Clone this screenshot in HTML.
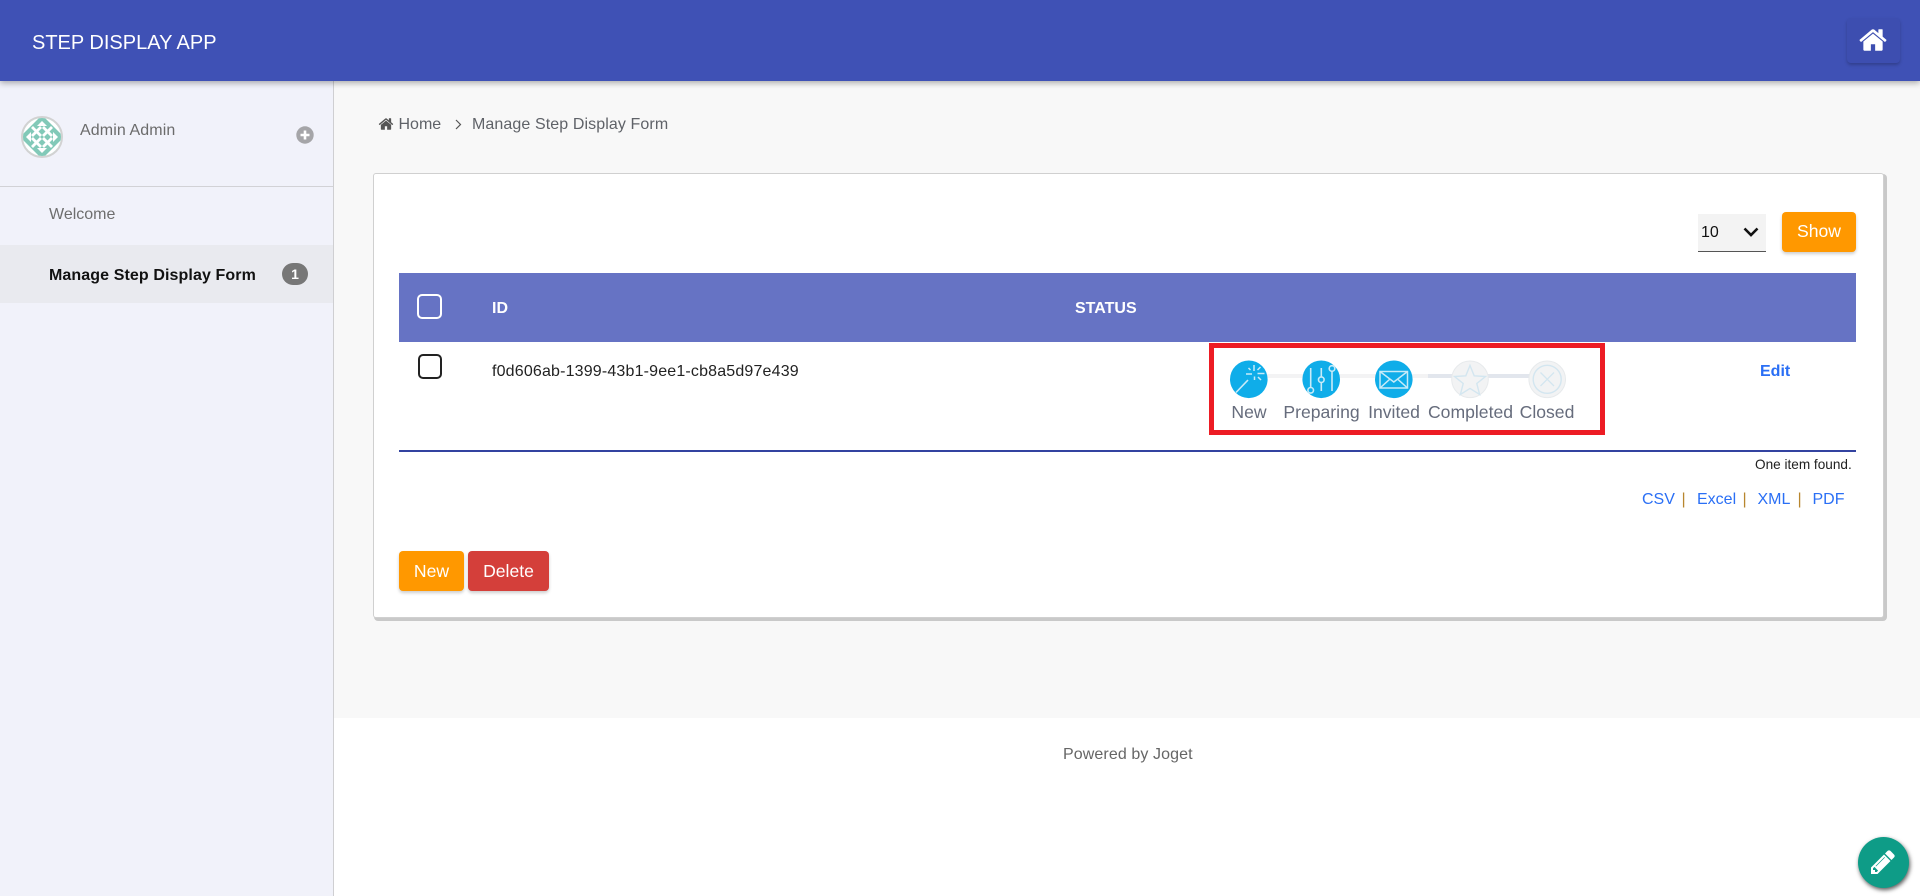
<!DOCTYPE html>
<html lang="en">
<head>
<meta charset="utf-8">
<title>Step Display App</title>
<style>
*{box-sizing:border-box}
html,body{margin:0;padding:0;width:1920px;height:896px;overflow:hidden;background:#fff;font-family:"Liberation Sans",Arial,sans-serif}
a{text-decoration:none}
.t{position:absolute;white-space:nowrap;line-height:20px;margin:0}
.abs{position:absolute}
#main{left:334px;top:81px;width:1586px;height:637px;background:#f8f8f8}
#side{left:0;top:81px;width:334px;height:815px;background:#f1f2fa;border-right:1px solid #cfcfd2}
#head{left:0;top:0;width:1920px;height:81px;background:#3f51b5;box-shadow:0 2px 6px rgba(0,0,0,.32)}
#homebtn{left:1847px;top:18px;width:53px;height:45px;background:#3d4eb0;border-radius:4px;box-shadow:0 2px 3px rgba(0,0,0,.22)}
#card{left:373px;top:173px;width:1511px;height:445px;background:#fff;border:1px solid #d0d0d0;border-radius:3px;box-shadow:2px 2px 0 1px #c9c9c9}
.btn{position:absolute;border:0;color:#fff;font:17.6px/20px "Liberation Sans",Arial,sans-serif;height:40px;border-radius:4px;padding:0;box-shadow:0 2px 3px rgba(0,0,0,.2);text-align:center}
input.cb{appearance:none;-webkit-appearance:none;position:absolute;margin:0;background:transparent;border-radius:5px}
.lbl{position:absolute;top:402px;line-height:20px;font-size:17.6px;color:#666c7c;white-space:nowrap;transform:translateX(-50%)}
.lnk{color:#2a6ff5}
.sep{color:#b8862e}
</style>
</head>
<body>
<div id="main" class="abs"></div>
<div id="side" class="abs"></div>
<div class="abs" style="left:0;top:186px;width:333px;height:1px;background:#d2d2d6"></div>
<div class="abs" style="left:0;top:245px;width:333px;height:58px;background:#e9eaef"></div>

<header id="head" class="abs"></header>
<div class="t" style="left:32px;top:33px;font-size:20px;color:#fff">STEP DISPLAY APP</div>
<div id="homebtn" class="abs"></div>
<svg class="abs" style="left:1858px;top:25px" width="30" height="30" viewBox="0 0 1792 1792"><path fill="#fff" d="M1472 992v480q0 26-19 45t-45 19h-384v-384h-256v384h-384q-26 0-45-19t-19-45v-480q0-1 .5-3t.5-3l575-474 575 474q1 2 1 6zm223-69l-62 74q-8 9-21 11h-3q-13 0-21-7l-692-577-692 577q-12 8-24 7-13-2-21-11l-62-74q-8-10-7-23.500t11-21.500l719-599q32-26 76-26t76 26l244 204v-195q0-14 9-23t23-9h192q14 0 23 9t9 23v408l219 182q10 8 11 21.500t-7 23.500z"/></svg>

<!-- sidebar -->
<svg class="abs" style="left:21px;top:116px" width="42" height="42" viewBox="0 0 42 42">
<defs><clipPath id="av"><circle cx="21" cy="21" r="19"/></clipPath></defs>
<circle cx="21" cy="21" r="20" fill="#fff" stroke="#d2d2d2" stroke-width="2"/>
<g clip-path="url(#av)">
<rect width="42" height="42" fill="#82c9b8"/>
<g fill="#fff">
<polygon points="21,5 26,10 16,10"/><polygon points="21,37 26,32 16,32"/><polygon points="5,21 10,16 10,26"/><polygon points="37,21 32,16 32,26"/>
<polygon points="2,2 18,2 2,18"/><polygon points="40,2 24,2 40,18"/><polygon points="2,40 18,40 2,24"/><polygon points="40,40 24,40 40,24"/>
<path d="M11 11l9 9m0-9l-9 9M22 11l9 9m0-9l-9 9M11 22l9 9m0-9l-9 9M22 22l9 9m0-9l-9 9" stroke="#fff" stroke-width="2.800" fill="none"/>
</g>
</g>
</svg>
<div class="t" style="left:80px;top:121px;font-size:16px;color:#6b6b6b;letter-spacing:.1px">Admin Admin</div>
<svg class="abs" style="left:296px;top:126px" width="18" height="18" viewBox="0 0 18 18"><circle cx="9" cy="9" r="8.700" fill="#a5a5a8"/><path d="M9 4.500v9M4.500 9h9" stroke="#fff" stroke-width="2.600"/></svg>
<a class="t" style="left:49px;top:205px;font-size:16px;color:#6e6e6e">Welcome</a>
<a class="t" style="left:49px;top:266px;font-size:16px;font-weight:bold;color:#111;letter-spacing:.1px">Manage Step Display Form</a>
<div class="abs" style="left:282px;top:263px;width:26px;height:22px;border-radius:11px;background:#777;color:#fff;font-size:14px;font-weight:bold;line-height:22px;text-align:center">1</div>

<!-- breadcrumb -->
<svg class="abs" style="left:378px;top:116px" width="16" height="16" viewBox="0 0 1792 1792"><path fill="#555" d="M1472 992v480q0 26-19 45t-45 19h-384v-384h-256v384h-384q-26 0-45-19t-19-45v-480q0-1 .5-3t.5-3l575-474 575 474q1 2 1 6zm223-69l-62 74q-8 9-21 11h-3q-13 0-21-7l-692-577-692 577q-12 8-24 7-13-2-21-11l-62-74q-8-10-7-23.500t11-21.500l719-599q32-26 76-26t76 26l244 204v-195q0-14 9-23t23-9h192q14 0 23 9t9 23v408l219 182q10 8 11 21.500t-7 23.500z"/></svg>
<a class="t" style="left:398.500px;top:115px;font-size:16px;color:#5f6268">Home</a>
<svg class="abs" style="left:454px;top:119px" width="9" height="11" viewBox="0 0 9 11"><path d="M2 1l4.500 4.500L2 10" fill="none" stroke="#555" stroke-width="1.200"/></svg>
<div class="t" style="left:472px;top:115px;font-size:16px;color:#5f6268;letter-spacing:.1px">Manage Step Display Form</div>

<!-- card -->
<div id="card" class="abs"></div>
<select class="abs" style="left:1698px;top:214px;width:68px;height:38px;border:0;border-bottom:1px solid #555;background:#f3f3f3;font:16px 'Liberation Sans',Arial,sans-serif;color:#111;appearance:none;-webkit-appearance:none;padding:0 0 0 3px;border-radius:0"><option>10</option></select>
<svg class="abs" style="left:1743px;top:226px" width="16" height="12" viewBox="0 0 16 12"><path d="M1.500 2.500L8 9l6.500-6.500" fill="none" stroke="#111" stroke-width="2.600"/></svg>
<button class="btn" style="left:1782px;top:212px;width:74px;padding-bottom:2px;background:#ff9800">Show</button>

<!-- table -->
<div class="abs" style="left:399px;top:273px;width:1457px;height:69px;background:#6673c4"></div>
<input type="checkbox" class="cb" style="left:417px;top:294px;width:25px;height:25px;border:2px solid #fff">
<div class="t" style="left:492px;top:299px;font-size:16px;font-weight:bold;color:#fff">ID</div>
<div class="t" style="left:1075px;top:299px;font-size:16px;font-weight:bold;color:#fff">STATUS</div>
<input type="checkbox" class="cb" style="left:418px;top:354px;width:24px;height:25px;border:2px solid #222">
<div class="t" style="left:492px;top:362px;font-size:16px;color:#222;letter-spacing:.17px">f0d606ab-1399-43b1-9ee1-cb8a5d97e439</div>

<!-- stepper -->
<div class="abs" style="left:1209px;top:343px;width:396px;height:92px;border:5px solid #ed1c24"></div>
<svg class="abs" style="left:1220px;top:355px" width="360" height="50" viewBox="1220 355 360 50">
<rect x="1262" y="374" width="166" height="4" fill="#f3f3f4"/>
<rect x="1428" y="374" width="104" height="4" fill="#e2e6ed"/>
<!-- New -->
<circle cx="1248.800" cy="379.300" r="18.800" fill="#0fade9"/>
<g stroke="#c8ebf8" fill="none" stroke-width="1.500">
<path d="M1236 392.500L1248 380" stroke-width="1.600"/>
<path d="M1254 365v6M1254.500 376.500v3.500M1257.500 373.500h7M1246 374h6M1257.500 370l3-3M1258 377l3 3M1250.500 370l-2-2"/>
</g>
<!-- Preparing -->
<circle cx="1321.200" cy="379.300" r="18.800" fill="#0fade9"/>
<g stroke="#c8ebf8" fill="none" stroke-width="1.600">
<path d="M1310.700 368v19.500M1321.300 368v9M1321.300 383v8M1332 371.500v19.500"/>
<g fill="#0fade9"><circle cx="1310.700" cy="390.300" r="2.800"/><circle cx="1321.300" cy="379.700" r="2.800"/><circle cx="1332" cy="368.500" r="2.800"/></g>
</g>
<!-- Invited -->
<circle cx="1393.800" cy="379.300" r="18.800" fill="#0fade9"/>
<g stroke="#c8ebf8" fill="none" stroke-width="1.500">
<rect x="1380" y="371.500" width="27.500" height="16.500"/>
<path d="M1380 371.500l13.800 10.500 13.700-10.500M1380 388l10-9M1407.500 388l-10-9"/>
</g>
<!-- Completed -->
<circle cx="1470" cy="379.300" r="18.300" fill="#f2f3f4" stroke="#e7eaec" stroke-width="1"/>
<path d="M1470 365.500l4.200 10.300 11.300.7-8.700 7 2.800 11-9.600-6.100-9.600 6.100 2.800-11-8.700-7 11.300-.7z" fill="none" stroke="#d3e6f0" stroke-width="1.400"/>
<!-- Closed -->
<circle cx="1547.200" cy="379.300" r="18.300" fill="#f2f3f4" stroke="#e7eaec" stroke-width="1"/>
<circle cx="1547.200" cy="379.300" r="14" fill="none" stroke="#d3e6f0" stroke-width="1.400"/>
<path d="M1540.500 372.500l13.500 13.500M1554 372.500l-13.500 13.500" stroke="#d3e6f0" stroke-width="1.300"/>
</svg>
<div class="lbl" style="left:1249px">New</div>
<div class="lbl" style="left:1321.500px">Preparing</div>
<div class="lbl" style="left:1394px">Invited</div>
<div class="lbl" style="left:1470.500px">Completed</div>
<div class="lbl" style="left:1547px">Closed</div>

<a class="t lnk" style="left:1760px;top:362px;font-size:16px;font-weight:bold">Edit</a>
<div class="abs" style="left:399px;top:450px;width:1457px;height:2px;background:#3343a0"></div>
<div class="t" style="left:1755px;top:455px;font-size:13.600px;color:#222">One item found.</div>
<a class="t lnk" style="left:1642px;top:490px;font-size:16px">CSV</a>
<span class="t sep" style="left:1681.500px;top:490px;font-size:16px">|</span>
<a class="t lnk" style="left:1697px;top:490px;font-size:16px">Excel</a>
<span class="t sep" style="left:1742.500px;top:490px;font-size:16px">|</span>
<a class="t lnk" style="left:1757.500px;top:490px;font-size:16px">XML</a>
<span class="t sep" style="left:1797.500px;top:490px;font-size:16px">|</span>
<a class="t lnk" style="left:1812.500px;top:490px;font-size:16px">PDF</a>

<button class="btn" style="left:399px;top:551px;width:65px;background:#ff9800">New</button>
<button class="btn" style="left:468px;top:551px;width:81px;background:#d43f3a">Delete</button>

<!-- footer -->
<div class="t" style="left:1063px;top:745px;font-size:16px;color:#666;letter-spacing:.1px">Powered by Joget</div>

<!-- fab -->
<div class="abs" style="left:1858px;top:837px;width:51px;height:51px;border-radius:50%;background:#0e9c87;box-shadow:1px 2px 4px rgba(0,0,0,.65)"></div>
<svg class="abs" style="left:1869px;top:848px" width="28" height="28" viewBox="0 0 1792 1792"><path fill="#fff" d="M491 1536l91-91-235-235-91 91v107h128v128h107zm523-928q0-22-22-22-10 0-17 7l-542 542q-7 7-7 17 0 22 22 22 10 0 17-7l542-542q7-7 7-17zm-54-192l416 416-832 832h-416v-416zm683 96q0 53-37 90l-166 166-416-416 166-165q36-38 90-38 53 0 91 38l235 234q37 39 37 91z"/></svg>
</body>
</html>
